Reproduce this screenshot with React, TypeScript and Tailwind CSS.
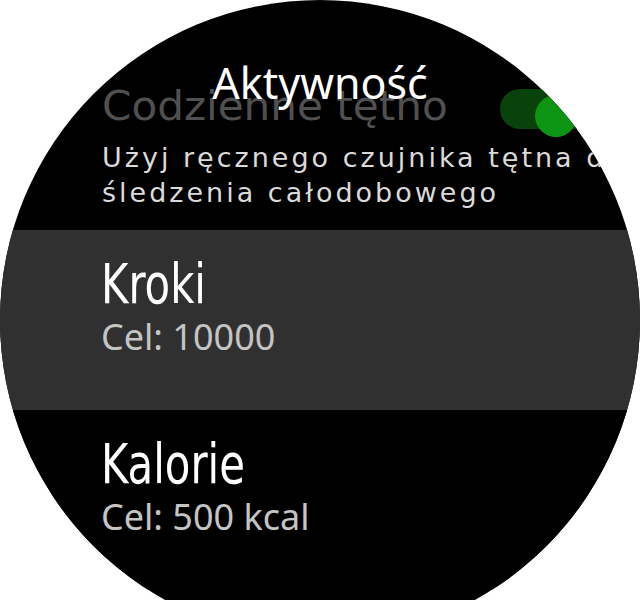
import React from "react";

function Toggle() {
  return (
    <div className="relative h-[48px] w-[110px] shrink-0">
      <div className="absolute left-0 top-0 h-[40px] w-[110px] rounded-full bg-[#0a420b]" />
      <div className="absolute left-[35px] top-[6px] h-[42px] w-[42px] rounded-full bg-[#0c9413]" />
    </div>
  );
}

function Item({ title, sub, bg }: { title: string; sub: string; bg: string }) {
  return (
    <div className={`${bg} h-[180px] pl-[101px] pt-[29px]`}>
      <div className="origin-left scale-x-[0.83] whitespace-nowrap text-[56px] leading-[50px] text-white [font-family:'DejaVu_Sans_Condensed','DejaVu_Sans',sans-serif]">
        {title}
      </div>
      <div className="mt-[11px] whitespace-nowrap text-[36px] leading-[34px] text-[#c4c4c4] [font-family:'Noto_Sans',sans-serif]">
        {sub}
      </div>
    </div>
  );
}

export default function App() {
  return (
    <div className="h-[600px] w-[640px] overflow-hidden bg-white">
      <div className="relative h-[640px] w-[640px] overflow-hidden rounded-full bg-black">
        <div className="pt-[82px]">
          <div className="flex items-start pl-[102px]">
            <div className="w-[398px] origin-left scale-x-[1.17] whitespace-nowrap text-[40px] leading-[48px] text-[#505050] [font-family:'DejaVu_Sans_Condensed','DejaVu_Sans',sans-serif]">
              Codzienne tętno
            </div>
            <div className="pt-[7px]">
              <Toggle />
            </div>
          </div>
          <div className="mt-[3px] whitespace-nowrap pl-[102px] text-[27px] leading-[35px] tracking-[3px] text-[#dadada] [font-family:'DejaVu_Sans',sans-serif]">
            <div>Użyj ręcznego czujnika tętna do</div>
            <div>śledzenia całodobowego</div>
          </div>
          <div className="h-[20px]" />
          <Item title="Kroki" sub="Cel: 10000" bg="bg-[#303030]" />
          <Item title="Kalorie" sub="Cel: 500 kcal" bg="bg-black" />
        </div>
        <div className="absolute left-0 right-0 top-[62px] text-center text-[43px] leading-[42px] text-white [font-family:'Noto_Sans',sans-serif]">
          Aktywność
        </div>
      </div>
    </div>
  );
}
